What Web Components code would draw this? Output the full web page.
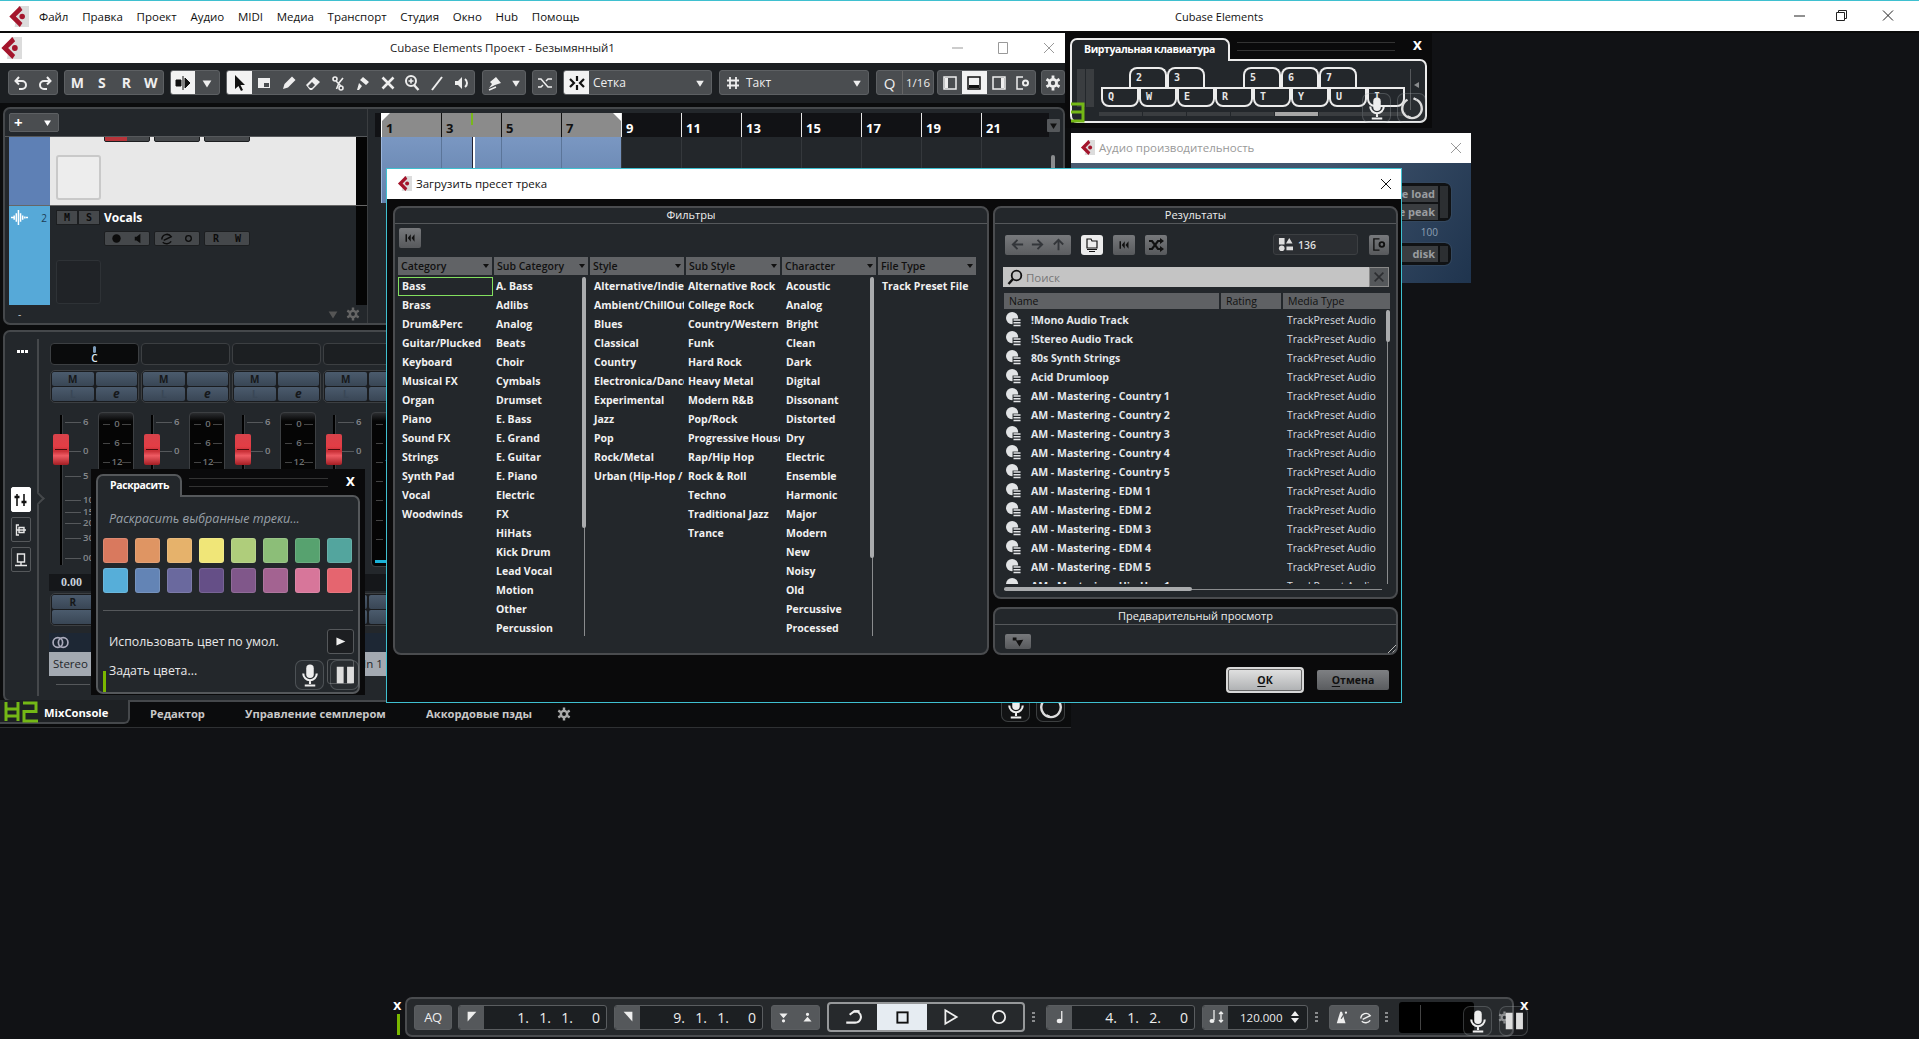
<!DOCTYPE html>
<html lang="ru">
<head>
<meta charset="utf-8">
<title>Cubase Elements</title>
<style>
  html, body { margin: 0; height: 100%; overflow: hidden; background: #111215; font-family: "Open Sans", "Liberation Sans", sans-serif; }
</style>
</head>
<body>
<cb-desktop>
  <cb-appbar></cb-appbar>

  <cb-window x="0" y="33" w="1071" h="694" bg="#0b0c0d">
    <cb-titlebar label="Cubase Elements Проект - Безымянный1" offset="390" controls="full" dim></cb-titlebar>
    <cb-toolbar></cb-toolbar>
    <cb-tracks></cb-tracks>
    <cb-mixconsole></cb-mixconsole>
    <cb-lowertabs></cb-lowertabs>
  </cb-window>

  <cb-window x="1065" y="33" w="367" h="95" bg="#0a0a0b">
    <cb-palette label="Виртуальная клавиатура" tab="160" focused><cb-keyboard></cb-keyboard></cb-palette>
  </cb-window>

  <cb-window x="1071" y="133" w="400" h="150" bg="#2c3d52">
    <cb-titlebar label="Аудио производительность" offset="28" controls="close" dim></cb-titlebar>
    <cb-perf></cb-perf>
  </cb-window>

  <cb-window x="386" y="168" w="1016" h="535" bg="#0a0a0b" border="#3fc0d0">
    <cb-titlebar label="Загрузить пресет трека" offset="29" controls="close"></cb-titlebar>
    <cb-presets></cb-presets>
  </cb-window>

  <cb-window x="91" y="469" w="274" h="226" bg="#0a0a0b">
    <cb-palette label="Раскрасить" tab="86"><cb-colorize></cb-colorize></cb-palette>
  </cb-window>

  <cb-window x="390" y="997" w="1145" h="41" bg="transparent"><cb-transport></cb-transport></cb-window>

  <cb-floatbtn kind="mic" x="295" y="660"></cb-floatbtn>
  <cb-floatbtn kind="pause" x="330" y="660"></cb-floatbtn>
  <cb-floatbtn kind="mic" x="1001" y="692" clip></cb-floatbtn>
  <cb-floatbtn kind="loop" x="1036" y="692" clip></cb-floatbtn>
  <cb-floatbtn kind="mic" x="1362" y="93"></cb-floatbtn>
  <cb-floatbtn kind="loop" x="1397" y="93"></cb-floatbtn>
  <cb-floatbtn kind="mic" x="1463" y="1006"></cb-floatbtn>
  <cb-floatbtn kind="pause" x="1499" y="1006"></cb-floatbtn>
  <cb-meterglyph></cb-meterglyph>
</cb-desktop>

<script>
const I = {
  logo: '<path d="M8 0h8v16H5z" fill="#dcdcdc"/><path d="M9 0 1 8l8 8 2-3-5-5 5-5z" fill="#a4152c"/><circle cx="10.8" cy="8" r="2.1" fill="#a4152c"/>',
  undo: '<path d="M6 2 2.5 6 6 9.500M3 6h6a4 4 0 0 1 0 8H6" fill="none" stroke="currentColor" stroke-width="2"/>',
  redo: '<path d="M10 2l3.500 4L10 9.500M13 6H7a4 4 0 0 0 0 8h3" fill="none" stroke="currentColor" stroke-width="2"/>',
  snap: '<path d="M1 5h5v6H1zM10 3l5 5-5 5zM8 1v14" fill="#111" stroke="#111"/>',
  down: '<path d="M3 5h10l-5 8z" fill="currentColor"/>',
  pointer: '<path d="M4 0v14l3.500-3 2.500 5 2-1-2.500-5H14z" fill="#111"/>',
  range: '<path d="M2 3h12v10H2z" fill="currentColor"/><path d="M8 8h5v4H8z" fill="#4a4d50"/>',
  pencil: '<path d="M2 14l1.500-5L11 1.500 14.500 5 7 12.500z" fill="currentColor"/>',
  eraser: '<path d="M1 10l8-8 6 5-8 8H5z" fill="currentColor"/><path d="M5 13l-2-2 4-4 3 3-3 3z" fill="#4a4d50"/>',
  scissors: '<circle cx="5" cy="4" r="2" fill="none" stroke="currentColor" stroke-width="1.600"/><circle cx="11" cy="13" r="2" fill="none" stroke="currentColor" stroke-width="1.600"/><path d="M6 6l5 5M13 3 9 8 6.500 14" fill="none" stroke="currentColor" stroke-width="1.600"/>',
  glue: '<path d="M8 2l6 5-3 3-6-5zM4 8l3 3-3 4H2z" fill="currentColor"/>',
  mute: '<path d="M2.500 2.500l11 11M13.500 2.500l-11 11" stroke="currentColor" stroke-width="2.600"/>',
  zoom: '<circle cx="7" cy="6" r="5" fill="none" stroke="currentColor" stroke-width="2"/><path d="M10 10l4.500 5" stroke="currentColor" stroke-width="2.400"/><path d="M4.500 6h5M7 3.500v5" stroke="currentColor" stroke-width="1.600"/>',
  line: '<path d="M3 15 13 2" stroke="currentColor" stroke-width="2"/>',
  speaker: '<path d="M8 2v12L4 10H1V6h3z" fill="currentColor"/><path d="M11 4a5 5 0 0 1 0 8" fill="none" stroke="currentColor" stroke-width="2"/>',
  auto: '<path d="M2 13l3-4-2-2 6-5 5 6-6 2z" fill="currentColor"/><path d="M2 15l7-3" stroke="currentColor" stroke-width="1.500"/>',
  cross: '<path d="M1 4h3l7 8h4M1 12h3l2-2M9 6l2-2h4" fill="none" stroke="currentColor" stroke-width="1.500"/>',
  grid: '<path d="M8 1v5M8 10v5M1 4l4 4-4 4M15 4l-4 4 4 4" fill="none" stroke="#111" stroke-width="2.200"/>',
  hash: '<path d="M5 2v12M11 2v12M2 5.500h12M2 10.500h12" stroke="currentColor" stroke-width="1.800"/>',
  panelL: '<rect x="2" y="2" width="12" height="12" fill="none" stroke="currentColor" stroke-width="1.500"/><rect x="3" y="3" width="3" height="10" fill="currentColor"/>',
  panelB: '<rect x="2" y="2" width="12" height="12" fill="none" stroke="#111" stroke-width="1.500"/><rect x="3" y="10" width="10" height="3" fill="#111"/>',
  panelR: '<rect x="2" y="2" width="12" height="12" fill="none" stroke="currentColor" stroke-width="1.500"/><rect x="10" y="3" width="3" height="10" fill="currentColor"/>',
  panelG: '<path d="M8 2H2v12h6" fill="none" stroke="currentColor" stroke-width="1.500"/><circle cx="10.500" cy="8" r="2.500" fill="none" stroke="currentColor" stroke-width="2"/>',
  gear: '<circle cx="8" cy="8" r="3.600" fill="none" stroke="currentColor" stroke-width="2.800"/><path d="M8 .5v3M8 12.500v3M1.500 4.200l2.600 1.500M11.900 10.300l2.600 1.500M1.500 11.800l2.600-1.500M11.900 5.700l2.600-1.500" stroke="currentColor" stroke-width="2.800"/>',
  wave: '<path d="M0 8h3M3 6v4M5 4v8M7 1v14M9 4v8M11 6v4M13 7v2M14 8h2" stroke="currentColor" stroke-width="1.400"/>',
  rec: '<circle cx="8" cy="8" r="4.500" fill="#0c0c0c"/>',
  spk: '<path d="M10 3v10L6 10H4V6h2z" fill="#0c0c0c"/>',
  edit: '<path d="M3 9a5.500 5.500 0 0 1 10-3L5 10M4 12a6 6 0 0 0 9-1" fill="none" stroke="#0c0c0c" stroke-width="1.600"/>',
  ring: '<circle cx="8" cy="8" r="3" fill="none" stroke="#0c0c0c" stroke-width="1.400"/>',
  reset: '<path d="M2 3h2v10H2zM9 3v10L5 8zM14 3v10l-4-5z" fill="currentColor"/>',
  left: '<path d="M8 3 3 8l5 5M3 8h11" fill="none" stroke="currentColor" stroke-width="2"/>',
  right: '<path d="M8 3l5 5-5 5M13 8H2" fill="none" stroke="currentColor" stroke-width="2"/>',
  up: '<path d="M3 8l5-5 5 5M8 3v11" fill="none" stroke="currentColor" stroke-width="2"/>',
  folder: '<path d="M3 2h4l1 2h5v7H3z" fill="none" stroke="#111" stroke-width="1.200"/><path d="M3 12.500h10M5 14.500h6" stroke="#111" stroke-width="1.200"/>',
  shuffle: '<path d="M1 4h3l6 8h3M1 12h3l6-8h3" fill="none" stroke="currentColor" stroke-width="2.200"/><path d="M12 1l4 3-4 3zM12 9l4 3-4 3z" fill="currentColor"/>',
  shapes: '<path d="M1 1h6v7H1zM12 1l3.500 6h-7zM9 10h7v4H9z" fill="currentColor"/><circle cx="4" cy="12" r="3" fill="currentColor"/>',
  search: '<circle cx="9.500" cy="6.500" r="4.800" fill="none" stroke="#111" stroke-width="1.800"/><path d="M6 10 1.500 15" stroke="#111" stroke-width="2.400"/>',
  close: '<path d="M3 3l10 10M13 3 3 13" stroke="currentColor" stroke-width="1.800"/>',
  preset: '<circle cx="6.500" cy="6.500" r="6.500" fill="currentColor"/><path d="M7 7h9v9H7z" fill="#23272b"/><path d="M8 8.500h7.500M8 11.500h7.500M8 14.500h7.500" stroke="currentColor" stroke-width="1.600"/>',
  corner: '<path d="M1 2h5v4H1zM5 6l10-1-5 9z" fill="#111"/>',
  play: '<path d="M3 3l11 5-11 5z" fill="currentColor"/>',
  mic: '<rect x="5.500" y="1" width="5" height="9" rx="2.500" fill="#eee"/><path d="M3.500 7a4.500 4.500 0 0 0 9 0M8 11.500V14M4.500 15h7" fill="none" stroke="#eee" stroke-width="1.400"/>',
  loop: '<path d="M5 2.500a6.500 6.500 0 1 0 6 0" fill="none" stroke="#ddd" stroke-width="1.600"/><path d="M11 2.500l-2-1M5 13.500l2 1" stroke="#ddd" stroke-width="1.600"/>',
  pause: '<rect x="2" y="2" width="5" height="12" fill="#ddd"/><rect x="9.500" y="2" width="5" height="12" fill="#ddd"/>',
  locL: '<path d="M3 2h10L3 13z" fill="#eee"/>',
  locR: '<path d="M3 2h10v11z" fill="#eee"/>',
  punchIn: '<path d="M3 3h10L8 9zM8 10a2 2 0 1 1 0 4 2 2 0 0 1 0-4z" fill="currentColor"/>',
  punchOut: '<path d="M3 13h10L8 7zM8 2a2 2 0 1 1 0 4 2 2 0 0 1 0-4z" fill="currentColor"/>',
  cycle: '<path d="M5 6 9 3h4v1a5 5 0 0 1-3 9H2" fill="none" stroke="currentColor" stroke-width="1.800"/><path d="M9 3H13" stroke="currentColor" stroke-width="1.800"/>',
  stopbox: '<rect x="2.500" y="2.500" width="11" height="11" fill="none" stroke="#111" stroke-width="2"/>',
  playo: '<path d="M3 2l10 6-10 6z" fill="none" stroke="currentColor" stroke-width="1.600"/>',
  reco: '<circle cx="8" cy="8" r="5.500" fill="none" stroke="currentColor" stroke-width="1.600"/>',
  note: '<path d="M10 1v11" stroke="currentColor" stroke-width="1.500"/><ellipse cx="7.500" cy="12.500" rx="3.200" ry="2.500" fill="currentColor"/>',
  tempo: '<path d="M6 1v10M13 3v10M11 5l2-2 2 2M11 11l2 2 2-2" fill="none" stroke="currentColor" stroke-width="1.300"/><ellipse cx="4" cy="12" rx="2.500" ry="2" fill="currentColor"/>',
  metro: '<path d="M6 2h2l4 13H2z" fill="currentColor"/><path d="M7 10l5-8" stroke="#55585b" stroke-width="1.400"/><circle cx="12.500" cy="3" r="1.300" fill="currentColor"/>',
  sync: '<path d="M3 9a5.500 5.500 0 0 1 10-3L5 10M4 12a6 6 0 0 0 9-1" fill="none" stroke="currentColor" stroke-width="1.500"/>',
  link: '<circle cx="5.500" cy="8" r="4.500" fill="none" stroke="#aab" stroke-width="1.600"/><circle cx="10.500" cy="8" r="4.500" fill="none" stroke="#aab" stroke-width="1.600"/>',
  fader: '<path d="M4 2v12M11 2v12" stroke="#111" stroke-width="1.600"/><path d="M1.500 5h5M8.500 10h5" stroke="#111" stroke-width="2.400"/>',
  rack: '<path d="M6 3H3.500v10H6M3.500 8H13M6 5.500h5v5H6z" fill="none" stroke="currentColor" stroke-width="1.400"/>',
  screen: '<path d="M4.500 2h7v8h-7zM8 10v3M2 13.500h12" fill="none" stroke="currentColor" stroke-width="1.400"/>'
};

function icon(name, size = 16, extra = '') {
  return `<svg width="${size}" height="${size}" viewBox="0 0 16 16" style="display:block;flex:none;${extra}">${I[name]}</svg>`;
}
function esc(s) {
  return s.replace(/&/g, '&amp;').replace(/</g, '&lt;');
}

class CbDesktop extends HTMLElement {
  constructor() {
    super();
    this.attachShadow({ mode: 'open' }).innerHTML = `
      <style>:host { display: block; position: relative; width: 1919px; height: 1039px; overflow: hidden; }</style>
      <slot></slot>`;
  }
}

class CbWindow extends HTMLElement {
  constructor() {
    super();
    const bw = this.getAttribute('border') ? 1 : 0;
    this.attachShadow({ mode: 'open' }).innerHTML = `
      <style>
        :host {
          display: flex; flex-direction: column; position: absolute; box-sizing: border-box;
          left: ${this.getAttribute('x')}px; top: ${this.getAttribute('y')}px;
          width: ${this.getAttribute('w')}px; height: ${this.getAttribute('h')}px;
          background: ${this.getAttribute('bg')};
          ${bw ? `border: 1px solid ${this.getAttribute('border')};` : ''}
        }
      </style>
      <slot></slot>`;
  }
}

class CbAppbar extends HTMLElement {
  constructor() {
    super();
    const items = ['Файл', 'Правка', 'Проект', 'Аудио', 'MIDI', 'Медиа', 'Транспорт', 'Студия', 'Окно', 'Hub', 'Помощь'];
    this.attachShadow({ mode: 'open' }).innerHTML = `
      <style>
        :host { display: flex; align-items: center; height: 33px; box-sizing: border-box; background: #fff; border-top: 1px solid #3fc0d0; border-bottom: 2px solid #0a0a0a; font: 11.5px "Open Sans", sans-serif; color: #111; position: relative; }
        .logo { margin: 0 10px 0 8px; }
        span { margin-right: 13.7px; }
        .title { position: absolute; left: 1175px; margin: 0; font-size: 11px; }
        .ctl { position: absolute; left: 0; top: 7px; color: #222; }
      </style>
      <div class="logo">${icon('logo', 21)}</div>
      ${items.map(t => `<span>${t}</span>`).join('')}
      <span class="title">Cubase Elements</span>
      <svg class="ctl" width="1919" height="18" style="pointer-events:none">
        <path d="M1794 8h11M1836.500 4.500h8v8h-8zM1838.500 4.500v-2h8v8h-2M1883 2.500l10 10M1893 2.500l-10 10" fill="none" stroke="#222"/>
      </svg>`;
  }
}

class CbTitlebar extends HTMLElement {
  constructor() {
    super();
    const dim = this.hasAttribute('dim');
    const off = this.getAttribute('offset');
    const c = this.getAttribute('controls');
    const col = dim ? '#999' : '#111';
    this.attachShadow({ mode: 'open' }).innerHTML = `
      <style>
        :host { display: flex; align-items: center; flex: none; height: 30px; background: #fff; font: 11.5px "Open Sans", sans-serif; color: ${this.getAttribute('label').startsWith('Cubase') ? '#222' : col}; position: relative; }
        .logo { position: absolute; left: ${off < 100 ? (off > 28 ? 10 : 9) : 0}px; top: ${off < 100 ? 7 : 4}px; }
        .txt { margin: -2px 0 0 ${off}px; white-space: nowrap; }
        .ctl { margin-left: auto; display: flex; align-items: center; color: ${col}; }
        svg.x { margin: 0 ${off == 390 ? 16 : 9}px 0 0; }
      </style>
      <div class="logo">${icon('logo', off < 100 ? 15 : 22)}</div>
      <span class="txt">${this.getAttribute('label')}</span>
      <div class="ctl">
        ${c === 'full' ? `
          <svg width="12" height="12" style="margin-right:33px"><path d="M0 6h11" stroke="#999"/></svg>
          <svg width="12" height="14" style="margin-right:34px"><path d="M1.500 1.500h9v11h-9z" fill="none" stroke="#999"/></svg>` : ''}
        <svg class="x" width="12" height="12"><path d="M1 1l10 10M11 1 1 11" stroke="currentColor" fill="none"/></svg>
      </div>`;
  }
}

class CbToolbar extends HTMLElement {
  constructor() {
    super();
    this.attachShadow({ mode: 'open' }).innerHTML = `
      <style>
        :host { display: flex; flex: none; height: 40px; box-sizing: border-box; padding: 7px 0 8px 8px; background: #1c1f22; color: #e8e8e8; font: 700 14px "Open Sans", sans-serif; }
        .g { display: flex; align-items: center; height: 25px; box-sizing: border-box; background: #4a4d50; border: 1px solid #5d6063; border-radius: 3px; margin-right: 6px; overflow: hidden; }
        .b { display: flex; align-items: center; justify-content: center; height: 100%; flex: 1 1 0; color: #eee; }
        .w { background: #f2f2f2; color: #111; }
        .txt { font-weight: 400; justify-content: flex-start; padding-left: 4px; flex: 4; font-size: 12px; }
        .sep { border-right: 1px solid #666; }
      </style>
      <div class="g" style="width:50px"><div class="b">${icon('undo')}</div><div class="b">${icon('redo')}</div></div>
      <div class="g" style="width:100px"><div class="b">M</div><div class="b">S</div><div class="b">R</div><div class="b">W</div></div>
      <div class="g" style="width:50px"><div class="b w">${icon('snap')}</div><div class="b">${icon('down', 14)}</div></div>
      <div class="g" style="width:249px;margin-right:7px">
        <div class="b w">${icon('pointer')}</div><div class="b">${icon('range')}</div><div class="b">${icon('pencil')}</div><div class="b">${icon('eraser')}</div><div class="b">${icon('scissors')}</div><div class="b">${icon('glue')}</div><div class="b">${icon('mute')}</div><div class="b">${icon('zoom')}</div><div class="b">${icon('line')}</div><div class="b">${icon('speaker')}</div>
      </div>
      <div class="g" style="width:44px"><div class="b">${icon('auto')}</div><div class="b" style="flex:.7">${icon('down', 12)}</div></div>
      <div class="g" style="width:25px"><div class="b">${icon('cross')}</div></div>
      <div class="g" style="width:149px;margin-right:7px"><div class="b w" style="flex:none;width:25px">${icon('grid')}</div><div class="b txt">Сетка</div><div class="b" style="flex:none;width:22px">${icon('down', 12)}</div></div>
      <div class="g" style="width:150px;margin-right:7px"><div class="b" style="flex:none;width:26px">${icon('hash')}</div><div class="b txt" style="padding-left:0">Такт</div><div class="b" style="flex:none;width:22px">${icon('down', 12)}</div></div>
      <div class="g" style="width:58px;margin-right:3px"><div class="b sep" style="flex:none;width:25px;font-weight:400;font-size:15px">Q</div><div class="b" style="font-weight:400;font-size:11.5px">1/16</div></div>
      <div class="g" style="width:99px;margin-right:5px"><div class="b">${icon('panelL')}</div><div class="b w">${icon('panelB')}</div><div class="b">${icon('panelR')}</div><div class="b">${icon('panelG')}</div></div>
      <div class="g" style="width:24px"><div class="b">${icon('gear')}</div></div>`;
  }
}

class CbTracks extends HTMLElement {
  constructor() {
    super();
    const ticks = [1, 3, 5, 7, 9, 11, 13, 15, 17, 19, 21];
    const miniRow = (dark) => `
      <div class="mini"><i class="${dark ? '' : 'red'}">${dark ? icon('rec', 15) : ''}</i><i>${dark ? icon('spk', 15) : ''}</i></div>
      <div class="mini"><i>${dark ? icon('edit', 15) : ''}</i><i>${dark ? icon('ring', 15) : ''}</i></div>
      <div class="mini"><i>${dark ? '<b>R</b>' : ''}</i><i>${dark ? '<b>W</b>' : ''}</i></div>`;
    this.attachShadow({ mode: 'open' }).innerHTML = `
      <style>
        :host { display: flex; flex: none; box-sizing: border-box; height: 218px; margin: 4px 6px 5px 3px; background: #23272b; border: 2px solid #45484b; border-radius: 7px; overflow: hidden; font-family: "Open Sans", sans-serif; }
        .list { width: 362px; flex: none; display: flex; flex-direction: column; border-right: 1px solid #3a3d40; }
        .head { height: 28px; box-sizing: border-box; padding: 4px 0 0 4px; border-bottom: 1px solid #55585b; }
        .add { display: flex; align-items: center; justify-content: space-between; padding: 0 5px 0 4px; width: 50px; height: 19px; box-sizing: border-box; background: #4a4d50; border: 1px solid #5d6063; border-radius: 2px; color: #fff; }
        .t1, .t2 { display: flex; margin-left: 4px; }
        .t1 { height: 68px; background: #e8e8e8; border-bottom: 1px solid #666; }
        .t2 { height: 99px; }
        .col { width: 41px; flex: none; position: relative; color: #fff; }
        .black { width: 11px; flex: none; margin-left: auto; background: #050505; }
        .body { width: 306px; box-sizing: border-box; flex: none; padding-left: 6px; position: relative; }
        .box { width: 45px; box-sizing: border-box; border-radius: 3px; }
        .minis { display: flex; gap: 4px; margin-left: 48px; }
        .mini { display: flex; width: 46px; height: 15px; box-sizing: border-box; background: #45484b; border: 1px solid #1c1e20; border-radius: 2px; overflow: hidden; }
        .mini i { flex: 1; display: flex; align-items: center; justify-content: center; font-style: normal; }
        .mini b { font: 700 10px "DejaVu Sans Mono", monospace; color: #0c0c0c; }
        .mini .red { background: #b8343a; }
        .ms { display: flex; width: 44px; height: 15px; }
        .ms b { flex: 1; display: flex; align-items: center; justify-content: center; background: #45484b; border: 1px solid #1c1e20; font: 700 10px "DejaVu Sans Mono", monospace; color: #0c0c0c; }
        .n { position: absolute; right: 3px; top: 5px; font-size: 10px; color: #1d3d55; }
        .name { font-size: 12px; font-weight: 700; color: #fff; margin-left: 4px; }
        .foot { display: flex; align-items: center; flex: 1; padding-left: 13px; color: #ccc; font-size: 10px; }
        .foot .dn { margin-left: auto; color: #555; }
        .foot .gr { margin: 0 7px 0 6px; color: #666; }
        .arr { flex: 1; position: relative; margin: 4px 0 0 7px; display: flex; flex-direction: column; background: #23272b; }
        .ruler, .lanes { display: flex; padding-left: 6px; }
        .ruler { height: 24px; background: #111215; width: 674px; box-sizing: border-box; }
        .tk { width: 60px; flex: none; box-sizing: border-box; border-left: 1px solid #e8e8e8; font-size: 13px; font-weight: 700; color: #fff; display: flex; align-items: flex-end; padding: 0 0 2px 4px; line-height: 14px; }
        .tk.on { background: #8b8b8b; border-left-color: #111; color: #111; }
        .tk:first-child { border-left-color: #fff; position: relative; }
        .tk.on:first-child::before { content: ""; position: absolute; left: 0; top: 0; border: 4px solid transparent; border-width: 8px 8px 0 0; border-top-color: #fff; }
        .tk.last { position: relative; }
        .tk.last::after { content: ""; position: absolute; right: 0; top: 0; border-style: solid; border-width: 8px 0 0 8px; border-color: #fff transparent transparent; }
        .lanes { flex: 1; }
        .cell { width: 60px; flex: none; box-sizing: border-box; border-left: 1px solid #34383c; }
        .cell.clip { height: 66px; background: linear-gradient(#7a97c2, #6281ab); border-left-color: #5b7599; }
        .cell.clip:first-child { border-left-color: #9cb6dc; }
        .ph { position: absolute; left: 96px; top: 0; width: 2px; height: 12px; background: #79b81a; }
        .pl { position: absolute; left: 98px; top: 24px; width: 2px; height: 60px; background: #fff; box-shadow: -1px 0 #223; }
        .side { position: absolute; right: 3px; top: 6px; width: 13px; height: 13px; background: #55585b; border-radius: 1px; display: flex; align-items: center; justify-content: center; color: #111; }
        .sb { position: absolute; right: 8px; top: 42px; bottom: 0; width: 4px; background: #8a8c8e; border-radius: 2px 2px 0 0; }
      </style>
      <div class="list">
        <div class="head"><div class="add"><span style="font:700 15px 'Open Sans',sans-serif;line-height:15px">+</span>${icon('down', 11)}</div></div>
        <div class="t1">
          <div class="col" style="background:#5e80b5"></div>
          <div class="body" style="overflow:hidden">
            <div class="minis" style="margin-top:-10px">${miniRow(false)}</div>
            <div class="box" style="height:45px;margin-top:13px;border:2px solid #c9c9c9;background:#ededed"></div>
          </div>
          <div class="black" style="background:#050505"></div>
        </div>
        <div class="t2">
          <div class="col" style="background:#56a9d8">
            <div style="position:absolute;left:2px;top:3px">${icon('wave', 17)}</div><span class="n">2</span>
          </div>
          <div class="body">
            <div style="display:flex;align-items:center;margin-top:3px"><div class="ms"><b>M</b><b>S</b></div><span class="name">Vocals</span></div>
            <div class="minis" style="margin-top:5px">${miniRow(true)}</div>
            <div class="box" style="height:44px;margin-top:14px;border:1px solid #2e3236;background:#202327"></div>
          </div>
          <div class="black"></div>
        </div>
        <div class="foot">-<span class="dn">${icon('down', 14)}</span><span class="gr">${icon('gear', 14)}</span></div>
      </div>
      <div class="arr">
        <div class="ruler">${ticks.map((n, i) => `<div class="tk ${i < 4 ? 'on' : ''} ${i === 3 ? 'last' : ''}">${n}</div>`).join('')}</div>
        <div class="lanes">${ticks.map((n, i) => `<div class="cell ${i < 4 ? 'clip' : ''}"></div>`).join('')}</div>
        <div class="ph"></div><div class="pl"></div>
        <div class="side">${icon('down', 11)}</div><div class="sb"></div>
      </div>`;
  }
}

class CbStrip extends HTMLElement {
  constructor() {
    super();
    const first = this.hasAttribute('first');
    // only the first strip's lower scale and buttons show past the colour palette that lies over the others
    const scale = [[8, '6'], [37, '0'], [62, first ? '5' : ''], [86, first ? '10' : ''], [98, first ? '15' : ''], [109, first ? '20' : ''], [124, first ? '30' : ''], [144, first ? '00' : '']];
    const marks = [[12, '0'], [31, '6'], [50, '12'], [69, ''], [88, ''], [108, ''], [127, '']];
    this.attachShadow({ mode: 'open' }).innerHTML = `
      <style>
        :host { display: flex; flex-direction: column; width: 91px; flex: none; font-family: "Open Sans", sans-serif; }
        .pan { box-sizing: border-box; height: 22px; width: 89px; margin-bottom: 5px; border: 1px solid #3c3f42; border-radius: 4px; background: ${first ? '#0a0b0c' : '#1c1f22'}; display: flex; flex-direction: column; align-items: center; color: #dfe8f2; font-size: 10px; line-height: 10px; font-weight: 600; }
        .pan i { width: 3px; height: 7px; margin-top: 2px; border-radius: 2px; background: #7d9cba; }
        .block { box-sizing: border-box; width: 89px; height: 33px; border: 1px solid #3c3f42; border-radius: 5px; display: grid; grid-template-columns: 1fr 1fr; grid-template-rows: 14px 14px; gap: 1px 2px; padding: 1px; background: #1a1c1f; }
        .block b { display: flex; align-items: center; justify-content: center; border-radius: 2px; background: linear-gradient(#4b5b6d, #394655); font: 700 10px/12px "Open Sans", sans-serif; color: #16181a; }
        .fz { position: relative; height: 155px; margin: 9px 0 7px; }
        .fz > * { position: absolute; }
        .track { left: 10px; top: 3px; height: 150px; width: 2px; background: #000; box-shadow: 1px 0 #3a3d40; }
        .cap { left: 3px; top: 22px; width: 16px; height: 31px; box-sizing: border-box; border-radius: 2px; background: linear-gradient(#d8434b, #e33d45 40%, #c82f36 55%, #ef5b63 70%, #a31e24); }
        .cap::after { content: ""; position: absolute; left: 2px; right: 2px; top: 15px; height: 1px; background: #4a0a0c; }
        .ln { left: 15px; width: 16px; height: 1px; background: #55585b; }
        .sc { left: 33px; font-size: 9.500px; line-height: 10px; font-weight: 600; color: #85888b; }
        .meter { left: 48px; top: 0; width: 36px; height: 155px; box-sizing: border-box; border: 1px solid #3c3f42; border-radius: 4px; background: linear-gradient(#2b2d30, #050505 8px); }
        .m { left: 53px; width: 28px; height: 1px; background: linear-gradient(90deg, #444 0 7px, transparent 7px 19px, #444 19px); }
        .ml { left: 60px; width: 14px; text-align: center; font-size: 9.500px; line-height: 10px; font-weight: 600; color: #6f7274; }
        .cy { left: 52px; top: 148px; width: 28px; height: 3px; background: #1ab2d8; }
        .val { height: 17px; background: #15171a; font: 700 12px "Liberation Serif", serif; color: #c9d2dc; line-height: 17px; padding-left: 12px; margin: 0 0 2px -1px; }
        .link { height: 19px; margin: 7px 0 0 -1px; background: #1d2734; display: flex; align-items: center; padding-left: 3px; }
        .label { height: 24px; margin: 0 1px 0 -1px; background: #a3a9b1; color: #23272b; font-size: 11.500px; line-height: 24px; padding-left: ${first ? 4 : 41}px; white-space: nowrap; overflow: hidden; }
        .rule { height: 1px; width: 34px; margin: 8px 0 0 6px; background: #55585b; }
      </style>
      <div class="pan">${first ? '<i></i>C' : ''}</div>
      <div class="block"><b>M</b><b></b><b style="color:#3a4756">L</b><b style="font:italic 700 12px/12px 'Open Sans',sans-serif">e</b></div>
      <div class="fz">
        <div class="track"></div>
        ${scale.map(s => `<div class="ln" style="top:${s[0] + 2}px"></div>${s[1] ? `<div class="sc" style="top:${s[0] - 3}px">${s[1]}</div>` : ''}`).join('')}
        <div class="cap"></div>
        <div class="meter"></div>
        ${marks.map(m => `<div class="m" style="top:${m[0]}px"></div>${m[1] ? `<div class="ml" style="top:${m[0] - 5}px">${m[1]}</div>` : ''}`).join('')}
        <div class="cy"></div>
      </div>
      <div class="val">${first ? '0.00' : ''}</div>
      <div class="block"><b>${first ? 'R' : ''}</b><b></b><b></b><b></b></div>
      <div class="link">${first ? icon('link', 17) : ''}</div>
      <div class="label">${this.getAttribute('label') === null ? 'Stereo' : this.getAttribute('label')}</div>
      <div class="rule"></div>`;
  }
}

class CbMixconsole extends HTMLElement {
  constructor() {
    super();
    this.attachShadow({ mode: 'open' }).innerHTML = `
      <style>
        :host { display: flex; flex: none; box-sizing: border-box; height: 372px; margin: 0 0 0 3px; width: 1062px; background: #23272b; border: 2px solid #45484b; border-radius: 7px; overflow: hidden; }
        .rail { width: 34px; flex: none; box-sizing: border-box; border-right: 2px solid #45484b; margin: 7px 0 4px; padding: 11px 0 0 6px; position: relative; }
        .dots { display: flex; gap: 1px; margin-left: 6px; height: 4px; }
        .dots i { width: 3px; height: 3px; background: #fff; }
        .rb { width: 20px; height: 25px; box-sizing: border-box; border: 1px solid #55585b; border-radius: 2px; margin-bottom: 5px; display: flex; align-items: center; justify-content: center; color: #e8e8e8; }
        .rb.on { background: #fff; border-color: #fff; }
        .chev { position: absolute; right: -6px; top: 155px; width: 7px; height: 7px; transform: rotate(45deg); background: #23272b; border: 2px solid #45484b; border-left: 0; border-bottom: 0; }
        .strips { display: flex; padding: 11px 0 0 11px; }
      </style>
      <div class="rail">
        <div class="dots"><i></i><i></i><i></i></div>
        <div class="rb on" style="margin-top:133px">${icon('fader')}</div>
        <div class="rb">${icon('rack')}</div>
        <div class="rb">${icon('screen')}</div>
        <div class="chev"></div>
      </div>
      <div class="strips">
        <cb-strip first></cb-strip><cb-strip label=""></cb-strip><cb-strip label=""></cb-strip><cb-strip label="In 1"></cb-strip>
      </div>`;
  }
}

class CbLowertabs extends HTMLElement {
  constructor() {
    super();
    this.attachShadow({ mode: 'open' }).innerHTML = `
      <style>
        :host { display: block; flex: none; height: 27px; margin-top: -2px; position: relative; font: 700 11.2px "Open Sans", sans-serif; color: #c8c8c8; border-bottom: 1px solid #2f3133; }
        .active { box-sizing: border-box; width: 130px; height: 24px; padding-left: 44px; line-height: 25px; color: #fff; background: #1e2124; border: 2px solid #45484b; border-width: 0 2px 2px 0; border-radius: 0 0 6px 0; }
        span { position: absolute; top: 6px; }
      </style>
      <div class="active">MixConsole</div>
      <span style="left:150px">Редактор</span>
      <span style="left:245px">Управление семплером</span>
      <span style="left:426px">Аккордовые пэды</span>
      <div style="position:absolute;left:557px;top:7px;color:#aaa">${icon('gear', 14)}</div>`;
  }
}

class CbPalette extends HTMLElement {
  constructor() {
    super();
    const bc = this.hasAttribute('focused') ? '#ececec' : '#55585b';
    this.attachShadow({ mode: 'open' }).innerHTML = `
      <style>
        :host { display: flex; flex-direction: column; flex: 1; box-sizing: border-box; padding: 5px; font-family: "Open Sans", sans-serif; color: #fff; }
        .head { display: flex; align-items: stretch; height: 21px; flex: none; }
        .tab { width: ${this.getAttribute('tab')}px; box-sizing: border-box; flex: none; padding: 2px 0 0 12px; background: #23272b; border: 2px solid ${bc}; border-bottom: 0; border-radius: 7px 7px 0 0; font: 700 10.500px/14px "Open Sans", sans-serif; letter-spacing: -.4px; position: relative; z-index: 1; height: 23px; white-space: nowrap; }
        .gr { flex: 1; margin: 4px 18px 0 7px; height: 7px; border-top: 1px solid #333; border-bottom: 1px solid #333; }
        .x { font: 700 12px/14px "DejaVu Sans", sans-serif; margin: 1px 5px 0 0; }
        .body { flex: 1; box-sizing: border-box; min-height: 0; background: #23272b; border: 2px solid ${bc}; border-radius: 0 7px 7px 7px; }
      </style>
      <div class="head"><div class="tab">${this.getAttribute('label')}</div><div class="gr"></div><div class="x">X</div></div>
      <div class="body"><slot></slot></div>`;
  }
}

class CbKeyboard extends HTMLElement {
  constructor() {
    super();
    const up = [['2'], ['3'], [null], ['5'], ['6'], ['7']];
    const low = ['Q', 'W', 'E', 'R', 'T', 'Y', 'U', 'I'];
    this.attachShadow({ mode: 'open' }).innerHTML = `
      <style>
        :host { display: flex; flex-direction: column; height: 60px; padding-top: 6px; box-sizing: border-box; }
        .main { display: flex; height: 40px; }
        .bars { display: flex; gap: 1px; width: 29px; box-sizing: border-box; padding-left: 5px; height: 38px; margin-top: 2px; flex: none; }
        .bars i { width: 8px; background: #3a3d40; }
        .keys { width: 304px; flex: none; }
        .row { display: flex; }
        .k { box-sizing: border-box; width: 38px; flex: none; border: 2px solid #ececec; font: 700 10px "DejaVu Sans Mono", monospace; color: #e8e8e8; padding-left: 5px; }
        .u { height: 20px; border-bottom: 0; border-radius: 8px 8px 0 0; line-height: 17px; }
        .l { height: 20px; border-radius: 0 0 8px 8px; border-top-color: #ececec; line-height: 15px; }
        .gap { border: 0; }
        .rail { margin-left: 5px; width: 1px; background: #55585b; position: relative; margin-top: 2px; height: 41px; }
        .rail::after { content: ""; position: absolute; left: 4px; top: 13px; border-style: solid; border-width: 3px 5px 3px 0; border-color: transparent #8a8c8e transparent transparent; }
        .range { display: flex; gap: 1px; margin: 5px 0 0 27px; height: 4px; }
        .range i { width: 43px; background: #3a3d40; }
        .range i.on { background: #a7a7a7; }
      </style>
      <div class="main">
        <div class="bars"><i></i><i></i></div>
        <div class="keys">
          <div class="row" style="margin-left:28px">
            ${up.map(k => k[0] ? `<div class="k u">${k[0]}</div>` : '<div class="k gap"></div>').join('')}
          </div>
          <div class="row">${low.map(k => `<div class="k l">${k}</div>`).join('')}</div>
        </div>
        <div class="rail"></div>
      </div>
      <div class="range"><i></i><i></i><i></i><i></i><i class="on"></i><i></i><i></i></div>`;
  }
}

class CbPerf extends HTMLElement {
  constructor() {
    super();
    this.attachShadow({ mode: 'open' }).innerHTML = `
      <style>
        :host { display: flex; flex-direction: column; align-items: flex-end; flex: 1; padding: 20px 20px 0 0; background: linear-gradient(120deg, #4a5b70 0%, #40546d 55%, #1f344e 100%); font: 700 11px "Open Sans", sans-serif; color: #9a9da0; }
        .box { display: flex; box-sizing: border-box; width: 120px; background: #101214; border: 2px solid #101214; outline: 1px solid #33475e; border-radius: 6px; padding: 1px; gap: 2px; }
        .ls { flex: 1; display: flex; flex-direction: column; gap: 2px; text-align: right; }
        .ls span { background: #3a3d40; height: 16px; line-height: 16px; padding-right: 3px; white-space: nowrap; }
        .bar { width: 8px; background: #2c2f32; }
        .n { font-weight: 400; font-size: 10px; margin: 4px 13px 4px 0; line-height: 14px; color: #8ea0b4; }
      </style>
      <div class="box" style="height:38px"><div class="ls"><span>Average load</span><span>Realtime peak</span></div><div class="bar"></div></div>
      <div class="n">100</div>
      <div class="box" style="height:22px"><div class="ls"><span>disk</span></div><div class="bar"></div></div>`;
  }
}

class CbFiltercol extends HTMLElement {
  constructor() {
    super();
    const items = (this.getAttribute('items') || '').split('|');
    const thumb = this.getAttribute('thumb');
    const sel = this.hasAttribute('selected');
    this.attachShadow({ mode: 'open' }).innerHTML = `
      <style>
        :host { display: block; width: ${this.getAttribute('w') || 94}px; flex: none; position: relative; font-family: "Open Sans", sans-serif; }
        .hd { height: 18px; box-sizing: border-box; background: #616366; color: #111; font-size: 10.500px; font-weight: 600; line-height: 18px; padding-left: 3px; position: relative; margin-bottom: 2px; }
        .hd::after { content: ""; position: absolute; right: 3px; top: 7px; border-style: solid; border-width: 4px 3.500px 0; border-color: #111 transparent transparent; }
        .it { height: 19px; line-height: 18px; box-sizing: border-box; padding-left: ${this.getAttribute('pad') || 4}px; font-size: 10.500px; font-weight: 700; color: #f1f1f1; white-space: nowrap; overflow: hidden; }
        .it.sel { margin-right: -1px; border: 1px solid #83e05f; padding-left: 3px; line-height: 17px; }
        .sb { position: absolute; right: 1px; top: 20px; height: 359px; width: 1px; background: #8a8c8e; }
        .th { position: absolute; right: -1px; top: 0; width: 4px; height: ${thumb}px; background: #a9abad; border-radius: 2px; }
      </style>
      <div class="hd">${this.getAttribute('label')}</div>
      ${items.map((t, i) => `<div class="it ${sel && i === 0 ? 'sel' : ''}">${esc(t)}</div>`).join('')}
      ${thumb ? `<div class="sb" style="right:${this.getAttribute('sbr')}px"><div class="th"></div></div>` : ''}`;
  }
}

class CbPresets extends HTMLElement {
  constructor() {
    super();
    this.attachShadow({ mode: 'open' }).innerHTML = `
      <style>
        :host { display: flex; flex-direction: column; flex: 1; padding: 7px 0 0 6px; font-family: "Open Sans", sans-serif; color: #eee; }
        .top { display: flex; gap: 4px; height: 449px; }
        .panel { box-sizing: border-box; background: #23272b; border: 2px solid #4a4c4f; border-radius: 8px; display: flex; flex-direction: column; position: relative; overflow: hidden; }
        .pt { height: 15px; flex: none; text-align: center; font-size: 11px; line-height: 13px; border-bottom: 1px solid #55585b; }
        .btn { display: flex; align-items: center; justify-content: center; height: 20px; box-sizing: border-box; background: linear-gradient(#77797c, #57595c); border-radius: 2px; color: #111; }
        .right { display: flex; flex-direction: column; width: 405px; gap: 8px; }
        .cols { display: flex; gap: 2px; margin: 9px 0 0 3px; }
        .tools { display: flex; align-items: center; margin: 10px 0 0 10px; height: 21px; }
        .nav { display: flex; width: 66px; height: 20px; background: linear-gradient(#77797c, #5b5d60); border-radius: 2px; color: #33363a; align-items: center; justify-content: space-around; padding: 0 2px; box-sizing: border-box; }
        .cnt { display: flex; align-items: center; gap: 5px; width: 85px; height: 21px; box-sizing: border-box; padding-left: 4px; margin-left: auto; background: #2b2e32; border: 1px solid #3c3f42; border-radius: 3px; font-size: 10.500px; font-weight: 600; color: #ddd; }
        .search { display: flex; align-items: center; height: 20px; margin: 12px 7px 0 8px; background: #c4c4c4; color: #777; font-size: 11.500px; }
        .search .x { margin-left: auto; width: 20px; height: 20px; background: #55585b; color: #2c2e31; display: flex; align-items: center; justify-content: center; box-sizing: border-box; border: 1px solid #888; }
        .th { display: grid; grid-template-columns: 215px 60px 107px; gap: 2px; margin: 6px 0 0 9px; height: 16px; flex: none; font-size: 10.500px; line-height: 16px; color: #111; }
        .th div { background: #5f6164; padding-left: 5px; }
        .rows { height: 274px; padding-top: 1px; overflow: hidden; flex: none; }
        .r { display: flex; align-items: center; height: 19px; font-size: 10.500px; font-weight: 700; color: #e4e8ec; margin-left: 11px; white-space: nowrap; }
        .r span { margin-left: 10px; width: 256px; }
        .r em { font-style: normal; font-weight: 400; color: #d9dde0; }
        .r i { color: #e2e4e6; }
        .vs { position: absolute; left: 392px; top: 102px; width: 1px; height: 274px; background: #8a8c8e; }
        .vs::after { content: ""; position: absolute; left: -1px; top: 0; width: 4px; height: 32px; border-radius: 2px; background: #a9abad; }
        .hs { position: absolute; left: 9px; top: 381px; width: 378px; height: 1px; background: #8a8c8e; }
        .hs::after { content: ""; position: absolute; left: 0; top: -2px; width: 188px; height: 4px; border-radius: 2px; background: #a9abad; }
        .grip { position: absolute; right: 0; bottom: 0; width: 10px; height: 10px; background: repeating-linear-gradient(135deg, transparent 0 2px, #bbb 2px 3px); clip-path: polygon(100% 0, 100% 100%, 0 100%); }
        .foot { display: flex; align-items: center; justify-content: flex-end; gap: 13px; height: 26px; margin-top: 12px; padding-right: 12px; }
        .ok, .cancel { display: flex; align-items: center; justify-content: center; box-sizing: border-box; font: 700 10.500px "Open Sans", sans-serif; color: #111; }
        .ok { width: 78px; height: 26px; border: 2px solid #d8d8d8; border-radius: 4px; background: linear-gradient(#e2e2e2, #aeb0b2); outline: 1px solid #666; outline-offset: -3px; }
        .cancel { width: 72px; height: 20px; border-radius: 2px; background: linear-gradient(#7e8083, #5a5c5f); }
        u { text-underline-offset: 2px; }
      </style>
      <div class="top">
        <div class="panel" style="width:596px">
          <div class="pt">Фильтры</div>
          <div class="btn" style="width:22px;margin:4px 0 0 4px">${icon('reset', 12)}</div>
          <div class="cols">
            <cb-filtercol label="Category" selected items="Bass|Brass|Drum&amp;Perc|Guitar/Plucked|Keyboard|Musical FX|Organ|Piano|Sound FX|Strings|Synth Pad|Vocal|Woodwinds"></cb-filtercol>
            <cb-filtercol label="Sub Category" pad="2" thumb="251" sbr="3" items="A. Bass|Adlibs|Analog|Beats|Choir|Cymbals|Drumset|E. Bass|E. Grand|E. Guitar|E. Piano|Electric|FX|HiHats|Kick Drum|Lead Vocal|Motion|Other|Percussion"></cb-filtercol>
            <cb-filtercol label="Style" items="Alternative/Indie|Ambient/ChillOut|Blues|Classical|Country|Electronica/Dance|Experimental|Jazz|Pop|Rock/Metal|Urban (Hip-Hop / R&amp;B)"></cb-filtercol>
            <cb-filtercol label="Sub Style" pad="2" items="Alternative Rock|College Rock|Country/Western|Funk|Hard Rock|Heavy Metal|Modern R&amp;B|Pop/Rock|Progressive House|Rap/Hip Hop|Rock &amp; Roll|Techno|Traditional Jazz|Trance"></cb-filtercol>
            <cb-filtercol label="Character" thumb="281" sbr="3" items="Acoustic|Analog|Bright|Clean|Dark|Digital|Dissonant|Distorted|Dry|Electric|Ensemble|Harmonic|Major|Modern|New|Noisy|Old|Percussive|Processed"></cb-filtercol>
            <cb-filtercol label="File Type" w="98" items="Track Preset File"></cb-filtercol>
          </div>
        </div>
        <div class="right">
          <div class="panel" style="height:393px">
            <div class="pt">Результаты</div>
            <div class="tools">
              <div class="nav">${icon('left', 15)}${icon('right', 15)}${icon('up', 15)}</div>
              <div class="btn" style="width:22px;margin-left:10px;background:#ececec;border-radius:3px">${icon('folder')}</div>
              <div class="btn" style="width:22px;margin-left:10px">${icon('reset', 12)}</div>
              <div class="btn" style="width:22px;margin-left:10px">${icon('shuffle')}</div>
              <div class="cnt">${icon('shapes', 15)}136</div>
              <div class="btn" style="width:20px;margin:0 7px 0 11px">${icon('panelG', 15)}</div>
            </div>
            <div class="search">
              <span style="margin:0 3px 0 4px">${icon('search')}</span>Поиск
              <div class="x">${icon('close', 14)}</div>
            </div>
            <div class="th"><div>Name</div><div>Rating</div><div>Media Type</div></div>
            <div class="rows" id="rows"></div>
            <div class="vs"></div>
            <div class="hs"></div>
          </div>
          <div class="panel" style="height:48px">
            <div class="pt">Предварительный просмотр</div>
            <div class="btn" style="width:26px;height:15px;margin:9px 0 0 10px">${icon('corner', 12)}</div>
            <div class="grip"></div>
          </div>
        </div>
      </div>
      <div class="foot">
        <div class="ok"><span><u>О</u>К</span></div>
        <div class="cancel"><span><u>О</u>тмена</span></div>
      </div>`;
    const names = ['!Mono Audio Track', '!Stereo Audio Track', '80s Synth Strings', 'Acid Drumloop',
      'AM - Mastering - Country 1', 'AM - Mastering - Country 2', 'AM - Mastering - Country 3', 'AM - Mastering - Country 4', 'AM - Mastering - Country 5',
      'AM - Mastering - EDM 1', 'AM - Mastering - EDM 2', 'AM - Mastering - EDM 3', 'AM - Mastering - EDM 4', 'AM - Mastering - EDM 5', 'AM - Mastering - Hip-Hop 1'];
    this.shadowRoot.getElementById('rows').innerHTML = names.map(n =>
      `<div class="r"><i>${icon('preset', 15)}</i><span>${n}</span><em>TrackPreset Audio</em></div>`).join('');
  }
}

class CbColorize extends HTMLElement {
  constructor() {
    super();
    const colors = ['#d9795e', '#df9563', '#e6b26b', '#f0e678', '#afcd7b', '#8cbe78', '#57a26f', '#53a59e',
                    '#56aed9', '#6384b5', '#6a699e', '#654f87', '#80578a', '#a36391', '#d7769a', '#e5656f'];
    this.attachShadow({ mode: 'open' }).innerHTML = `
      <style>
        :host { display: block; box-sizing: border-box; padding: 0 6px 0 5px; font-family: "Open Sans", sans-serif; position: relative; height: 195px; overflow: hidden; }
        .hint { font: italic 12.500px/16px "Open Sans", sans-serif; color: #98a0a8; margin: 14px 0 0 6px; }
        .sw { display: grid; grid-template-columns: repeat(8, 25px); gap: 5px 7px; margin: 11px 0 0 0; }
        .sw i { height: 25px; border-radius: 3px; box-shadow: inset 0 0 0 1px rgba(255,255,255,.12); }
        hr { border: 0; height: 1px; background: #55585b; margin: 17px 0 23px; width: 250px; }
        .line { font-size: 12.300px; line-height: 16px; color: #e8e8e8; margin-left: 6px; }
        .pb { position: absolute; left: 229px; width: 27px; height: 25px; box-sizing: border-box; border: 1px solid #55585b; border-radius: 3px; background: #1c1e21; color: #eee; display: flex; align-items: center; justify-content: center; }
        .green { position: absolute; left: 5px; bottom: 0; width: 3px; height: 21px; background: #7ab800; }
      </style>
      <div class="hint">Раскрасить выбранные треки...</div>
      <div class="sw">${colors.map(c => `<i style="background:${c}"></i>`).join('')}</div>
      <hr>
      <div class="line">Использовать цвет по умол.</div>
      <div class="line" style="margin-top:13px">Задать цвета...</div>
      <div class="pb" style="top:132px">${icon('play', 13)}</div>
      <div class="pb" style="top:162px;background:none"></div>
      <div class="green"></div>`;
  }
}

class CbTransport extends HTMLElement {
  constructor() {
    super();
    const nums = (a) => `<div class="num">${a.map((n, i) => `<span class="${i === 3 ? 'e' : ''}">${n}</span>`).join('')}</div>`;
    const dots = '<div class="dots"><i></i><i></i><i></i></div>';
    this.attachShadow({ mode: 'open' }).innerHTML = `
      <style>
        :host { display: flex; flex: 1; font-family: "Open Sans", sans-serif; color: #eee; position: relative; }
        .x { position: absolute; left: 3px; top: 3px; font: 700 11px "DejaVu Sans", sans-serif; color: #fff; }
        .x.r { left: 1130px; }
        .gr { position: absolute; left: 7px; top: 17px; width: 3px; height: 21px; background: #7ab800; }
        .main { display: flex; align-items: center; box-sizing: border-box; margin-left: 15px; width: 1109px; height: 40px; padding-left: 7px; background: #26292c; border: 2px solid #4a4c4f; border-radius: 7px; }
        .g { display: flex; align-items: center; box-sizing: border-box; height: 25px; border: 1px solid #5a5d60; border-radius: 3px; background: #1c1f22; overflow: hidden; margin-right: 6px; }
        .gy { background: #55585b; color: #eee; }
        .ic { display: flex; align-items: center; justify-content: center; align-self: stretch; flex: none; width: 25px; background: #55585b; }
        .num { display: flex; flex: 1; justify-content: flex-end; padding-right: 6px; font-size: 14px; color: #eee; }
        .num span { width: 22px; text-align: right; }
        .num span.e { width: 27px; }
        .big { display: flex; align-items: center; box-sizing: border-box; height: 30px; width: 198px; border: 2px solid #96989a; border-radius: 4px; overflow: hidden; margin: 0 6px 0 1px; }
        .big div { flex: 1; height: 100%; display: flex; align-items: center; justify-content: center; }
        .big .on { background: #e6ecf2; flex: none; width: 50px; }
        .dots { display: flex; flex-direction: column; gap: 1px; width: 3px; margin: 0 6px 0 1px; }
        .dots i { height: 2px; width: 3px; background: #8a8c8e; margin-bottom: 1px; }
        .lcd { width: 75px; height: 31px; border-radius: 3px; background: #000; position: relative; }
        .lcd::after { content: ""; position: absolute; left: 21px; top: 3px; bottom: 3px; width: 1px; background: #444; }
      </style>
      <div class="x">X</div><div class="gr"></div>
      <div class="main">
        <div class="g gy" style="width:38px;justify-content:center;font-size:13px;letter-spacing:-.5px">AQ</div>
        <div class="g" style="width:149px;margin-right:7px"><div class="ic">${icon('locL', 14)}</div>${nums(['1.', '1.', '1.', '0'])}</div>
        <div class="g" style="width:149px;margin-right:8px"><div class="ic">${icon('locR', 14)}</div>${nums(['9.', '1.', '1.', '0'])}</div>
        <div class="g gy" style="width:49px;justify-content:space-around">${icon('punchIn', 13)}${icon('punchOut', 13)}</div>
        <div class="big"><div>${icon('cycle', 18)}</div><div class="on">${icon('stopbox', 15)}</div><div>${icon('playo', 18)}</div><div>${icon('reco', 18)}</div></div>
        ${dots}
        <div class="g" style="width:149px;margin:0 7px 0 5px"><div class="ic">${icon('note', 14)}</div>${nums(['4.', '1.', '2.', '0'])}</div>
        <div class="g" style="width:106px;margin-right:6px"><div class="ic">${icon('tempo', 16)}</div><span style="font-size:11.500px;margin-left:12px">120.000</span><svg width="10" height="16" style="margin-left:8px"><path d="M1 7 5 2l4 5zM1 9l4 5 4-5z" fill="#eee"/></svg></div>
        ${dots}
        <div class="g gy" style="width:50px;margin:0 5px 0 5px;justify-content:space-around">${icon('metro', 14)}${icon('sync', 15)}</div>
        ${dots}
        <div class="lcd" style="margin-left:5px"></div>
        <div style="margin-left:24px;color:#8a8c8e">${icon('gear', 13)}</div>
      </div>
      <div class="x r">X</div>`;
  }
}

class CbFloatbtn extends HTMLElement {
  constructor() {
    super();
    const kind = this.getAttribute('kind');
    const clip = this.hasAttribute('clip');
    this.attachShadow({ mode: 'open' }).innerHTML = `
      <style>
        :host { position: absolute; left: ${this.getAttribute('x')}px; top: ${this.getAttribute('y')}px; width: 29px; height: 30px; box-sizing: border-box; border: 1px solid rgba(160,165,170,.3); border-radius: 7px; background: rgba(255,255,255,.03); display: flex; align-items: center; justify-content: center; ${clip ? 'clip-path: inset(11px 0 0 0);' : ''} }
      </style>
      ${icon(kind, kind === 'pause' ? 22 : 24)}`;
  }
}

class CbMeterglyph extends HTMLElement {
  constructor() {
    super();
    this.attachShadow({ mode: 'open' }).innerHTML = `
      <style>:host { display: contents; } svg { position: absolute; display: block; }</style>
      <svg style="left:4px;top:701px" width="34" height="22"><path d="M2 1v19M14 1v19M2 8h12M2 15h12M19 2h13v8.500H20V20h14" fill="none" stroke="#74b816" stroke-width="3"/></svg>
      <svg style="left:1070px;top:102px" width="16" height="21"><path d="M1 2h12v8H1M13 10v9H1" fill="none" stroke="#74b816" stroke-width="3"/></svg>`;
  }
}

customElements.define('cb-desktop', CbDesktop);
customElements.define('cb-window', CbWindow);
customElements.define('cb-appbar', CbAppbar);
customElements.define('cb-titlebar', CbTitlebar);
customElements.define('cb-toolbar', CbToolbar);
customElements.define('cb-tracks', CbTracks);
customElements.define('cb-strip', CbStrip);
customElements.define('cb-mixconsole', CbMixconsole);
customElements.define('cb-lowertabs', CbLowertabs);
customElements.define('cb-palette', CbPalette);
customElements.define('cb-keyboard', CbKeyboard);
customElements.define('cb-perf', CbPerf);
customElements.define('cb-filtercol', CbFiltercol);
customElements.define('cb-presets', CbPresets);
customElements.define('cb-colorize', CbColorize);
customElements.define('cb-transport', CbTransport);
customElements.define('cb-floatbtn', CbFloatbtn);
customElements.define('cb-meterglyph', CbMeterglyph);
</script>
</body>
</html>
